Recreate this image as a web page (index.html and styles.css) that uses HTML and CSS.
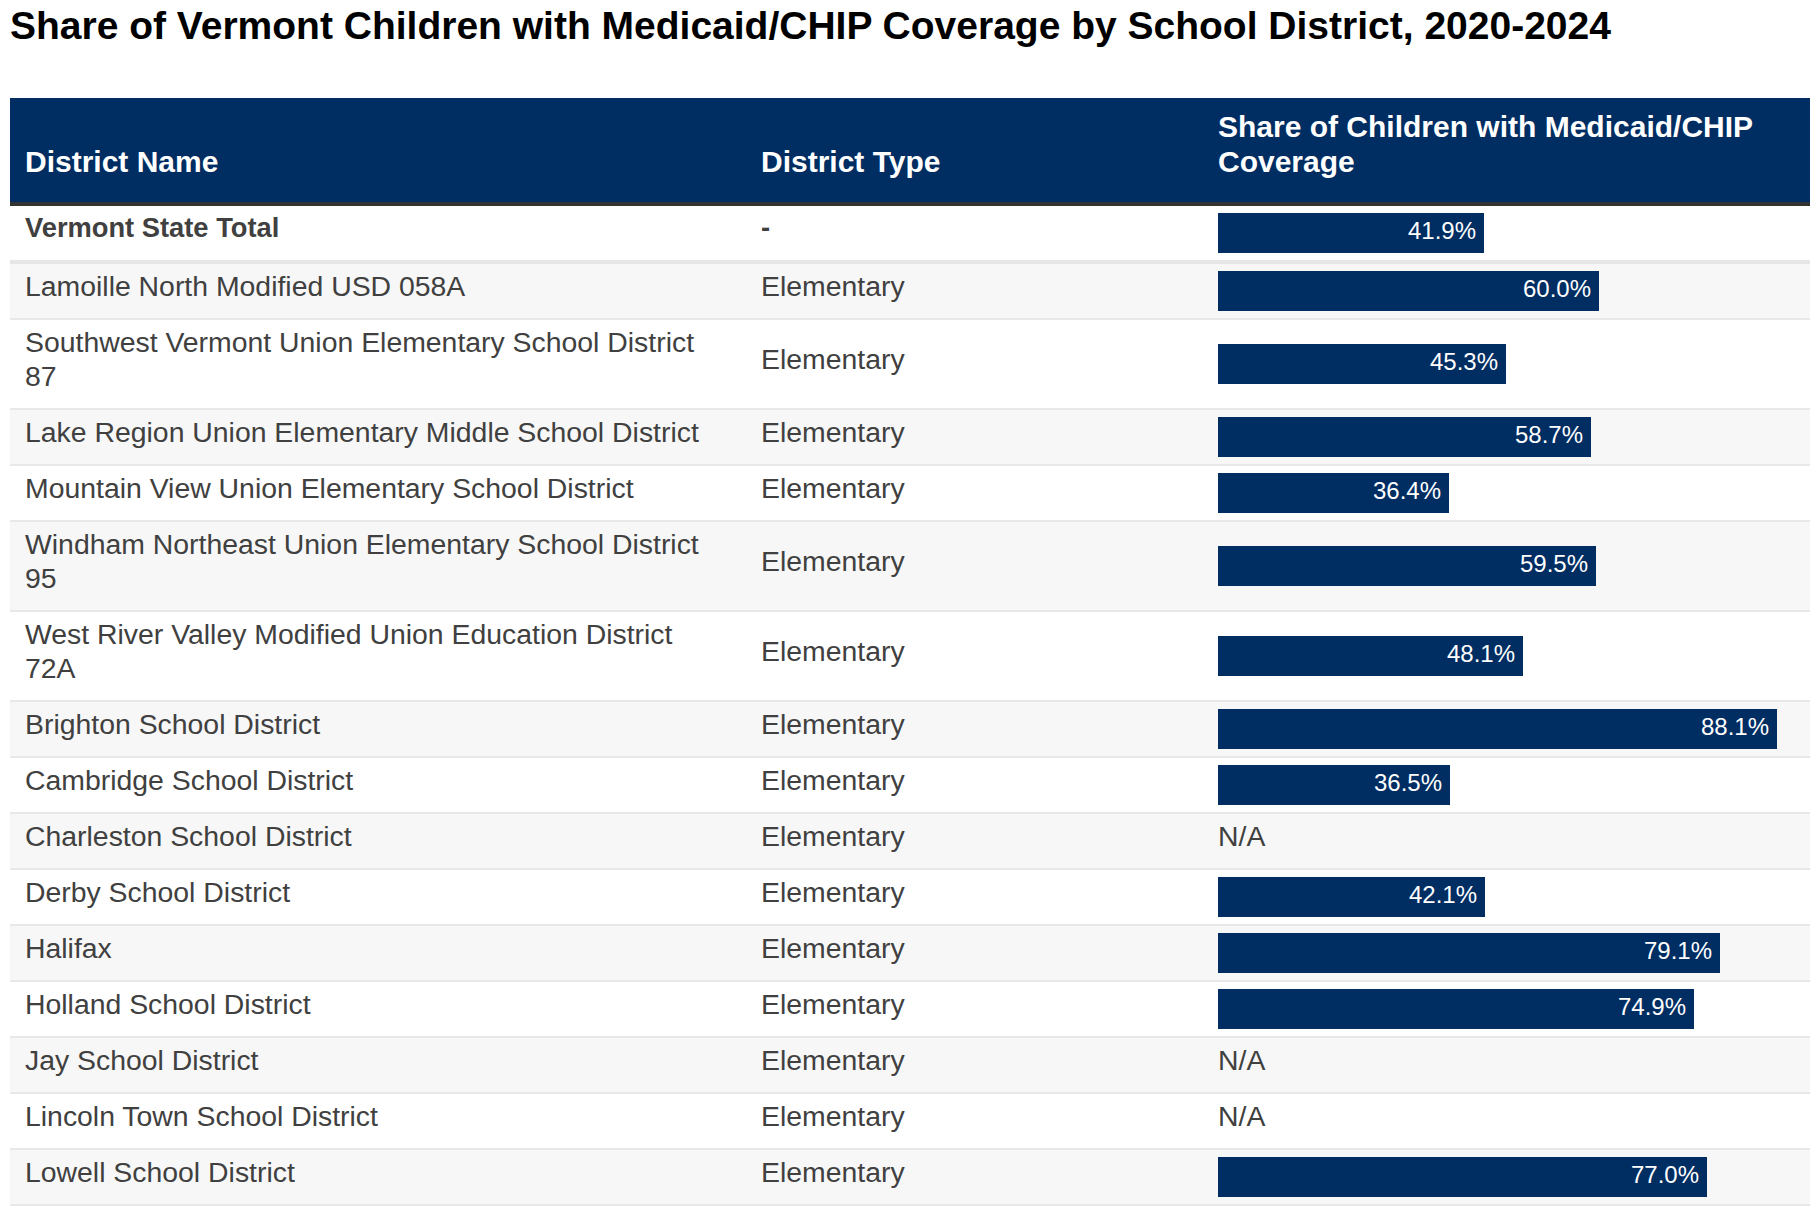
FILE: index.html
```html
<!DOCTYPE html>
<html lang="en">
<head>
<meta charset="utf-8">
<title>Share of Vermont Children with Medicaid/CHIP Coverage</title>
<link rel="stylesheet" href="styles.css">
</head>
<body>
<h1 class="title">Share of Vermont Children with Medicaid/CHIP Coverage by School District, 2020-2024</h1>
<table class="data">
  <colgroup>
    <col class="c-name">
    <col class="c-type">
    <col class="c-share">
  </colgroup>
  <thead>
    <tr>
      <th>District Name</th>
      <th>District Type</th>
      <th>Share of Children with Medicaid/CHIP Coverage</th>
    </tr>
  </thead>
  <tbody>
    <tr class="total">
      <td>Vermont State Total</td>
      <td>-</td>
      <td class="barcell"><div class="bar" style="width:266px">41.9%</div></td>
    </tr>
    <tr>
      <td>Lamoille North Modified USD 058A</td>
      <td>Elementary</td>
      <td class="barcell"><div class="bar" style="width:381px">60.0%</div></td>
    </tr>
    <tr>
      <td>Southwest Vermont Union Elementary School District 87</td>
      <td>Elementary</td>
      <td class="barcell"><div class="bar" style="width:288px">45.3%</div></td>
    </tr>
    <tr>
      <td>Lake Region Union Elementary Middle School District</td>
      <td>Elementary</td>
      <td class="barcell"><div class="bar" style="width:373px">58.7%</div></td>
    </tr>
    <tr>
      <td>Mountain View Union Elementary School District</td>
      <td>Elementary</td>
      <td class="barcell"><div class="bar" style="width:231px">36.4%</div></td>
    </tr>
    <tr>
      <td>Windham Northeast Union Elementary School District 95</td>
      <td>Elementary</td>
      <td class="barcell"><div class="bar" style="width:378px">59.5%</div></td>
    </tr>
    <tr>
      <td>West River Valley Modified Union Education District 72A</td>
      <td>Elementary</td>
      <td class="barcell"><div class="bar" style="width:305px">48.1%</div></td>
    </tr>
    <tr>
      <td>Brighton School District</td>
      <td>Elementary</td>
      <td class="barcell"><div class="bar" style="width:559px">88.1%</div></td>
    </tr>
    <tr>
      <td>Cambridge School District</td>
      <td>Elementary</td>
      <td class="barcell"><div class="bar" style="width:232px">36.5%</div></td>
    </tr>
    <tr>
      <td>Charleston School District</td>
      <td>Elementary</td>
      <td class="na">N/A</td>
    </tr>
    <tr>
      <td>Derby School District</td>
      <td>Elementary</td>
      <td class="barcell"><div class="bar" style="width:267px">42.1%</div></td>
    </tr>
    <tr>
      <td>Halifax</td>
      <td>Elementary</td>
      <td class="barcell"><div class="bar" style="width:502px">79.1%</div></td>
    </tr>
    <tr>
      <td>Holland School District</td>
      <td>Elementary</td>
      <td class="barcell"><div class="bar" style="width:476px">74.9%</div></td>
    </tr>
    <tr>
      <td>Jay School District</td>
      <td>Elementary</td>
      <td class="na">N/A</td>
    </tr>
    <tr>
      <td>Lincoln Town School District</td>
      <td>Elementary</td>
      <td class="na">N/A</td>
    </tr>
    <tr>
      <td>Lowell School District</td>
      <td>Elementary</td>
      <td class="barcell"><div class="bar" style="width:489px">77.0%</div></td>
    </tr>
  </tbody>
</table>
</body>
</html>
```

FILE: styles.css
```css
html, body {
  margin: 0;
  padding: 0;
  background: #ffffff;
}

body {
  padding: 0 10px;
  font-family: "Liberation Sans", Arial, Helvetica, sans-serif;
  color: #404040;
}

.title {
  margin: 4px 0 50px 0;
  font-size: 39px;
  line-height: 44px;
  font-weight: 700;
  color: #000000;
}

.data {
  width: 1800px;
  table-layout: fixed;
  border-collapse: separate;
  border-spacing: 0;
}

.c-name { width: 736px; }
.c-type { width: 457px; }
.c-share { width: 607px; }

.data th {
  background: #002d62;
  color: #ffffff;
  font-size: 30px;
  line-height: 35px;
  font-weight: 700;
  text-align: left;
  vertical-align: bottom;
  padding: 11px 12px 23px 15px;
  border-bottom: 4px solid #333333;
}

.data td {
  font-size: 28.4px;
  line-height: 34px;
  text-align: left;
  vertical-align: middle;
  padding: 5px 30px 15px 15px;
  border-bottom: 2px solid #e8e8e8;
}

.data tbody tr:nth-child(even) td {
  background: #f7f7f7;
}

.data tr.total td {
  font-weight: 700;
  font-size: 27.3px;
  border-bottom: 4px solid #e6e6e6;
}

.data td.barcell {
  padding: 7px 12px 7px 15px;
}

.bar {
  box-sizing: border-box;
  height: 40px;
  background: #002d62;
  color: #ffffff;
  font-size: 24px;
  font-weight: 400;
  line-height: 36px;
  text-align: right;
  padding-right: 8px;
  white-space: nowrap;
}

.data tr.total td .bar {
  font-weight: 400;
  font-size: 24px;
}
```
